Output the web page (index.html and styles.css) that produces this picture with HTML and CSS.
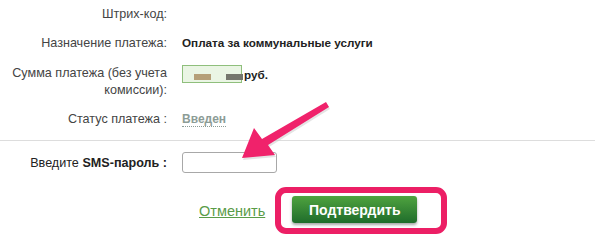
FILE: index.html
```html
<!DOCTYPE html>
<html lang="ru">
<head>
    <meta charset="UTF-8">
    <title>Подтверждение платежа</title>
    <link rel="stylesheet" href="styles.css">
</head>
<body>
    <div class="page">
        <!-- Детали платежа -->
        <div class="details">
            <div class="row r1">
                <span class="label">Штрих-код:</span>
                <span class="value"></span>
            </div>
            <div class="row r2">
                <span class="label">Назначение платежа:</span>
                <span class="value strong">Оплата за коммунальные услуги</span>
            </div>
            <div class="row r3">
                <span class="label">Сумма платежа (без учета<br>комиссии):</span>
                <span class="value sum">
                    <span class="sum-box"><i class="blur b1"></i><i class="blur b2"></i></span>
                    <span class="strong">руб.</span>
                </span>
            </div>
            <div class="row r4">
                <span class="label">Статус платежа :</span>
                <span class="value"><span class="status">Введен</span></span>
            </div>
        </div>

        <hr class="divider">

        <!-- SMS-пароль -->
        <div class="row sms">
            <label class="label" for="sms">Введите <b>SMS-пароль :</b></label>
            <span class="value"><input id="sms" class="sms-input" type="text"></span>
        </div>

        <!-- Кнопки -->
        <div class="actions">
            <a href="#" class="cancel">Отменить</a>
            <span class="highlight">
                <button class="confirm">Подтвердить</button>
            </span>
        </div>

        <!-- Стрелка-подсказка -->
        <svg class="arrow" width="110" height="80" viewBox="0 0 110 80">
            <path d="M96 12 L99 17 L38 55 L45 65 L12 68 L24 38 L32 49 Z" fill="#c9c9c9" opacity="0.5" transform="translate(1 2)"/>
            <path d="M96 12 L99 17 L38 55 L45 65 L12 68 L24 38 L32 49 Z" fill="#f0226b"/>
        </svg>
    </div>
</body>
</html>
```

FILE: styles.css
```css
* {
    margin: 0;
    padding: 0;
    box-sizing: border-box;
}

body {
    font-family: 'Liberation Sans', Arial, sans-serif;
    font-size: 12.6px;
    background-color: #fff;
    color: #444;
    width: 595px;
    height: 244px;
    overflow: hidden;
}

.page {
    position: relative;
    height: 100%;
}

.details {
    padding-top: 6px;
}

.row {
    display: grid;
    grid-template-columns: 167px 1fr;
    column-gap: 15px;
    line-height: 16px;
}

.label {
    text-align: right;
    color: #444;
}

.value {
    color: #222;
}

.strong {
    font-weight: bold;
    font-size: 11.7px;
}

.r1 {
    margin-bottom: 13px;
}

.r2 {
    margin-bottom: 14px;
}

.r3 {
    line-height: 17px;
    align-items: start;
    margin-bottom: 12px;
}

.sum {
    display: flex;
    align-items: center;
    height: 18px;
}

.sum-box {
    display: block;
    position: relative;
    width: 60px;
    height: 18px;
    border: 1px solid #8fbf7c;
    background-color: #eaf5e4;
}

.blur {
    position: absolute;
    top: 8px;
    height: 6px;
    filter: blur(0.6px);
}

.b1 {
    left: 11px;
    width: 17px;
    background-color: #b59f78;
}

.b2 {
    left: 43px;
    width: 17px;
    background-color: #75766d;
}

.sum .strong {
    margin-left: 2px;
}

.status {
    font-weight: bold;
    font-size: 12px;
    color: #8c9c96;
    border-bottom: 1px dotted #8c9c96;
}

.divider {
    border: none;
    border-top: 1px solid #ddd;
    margin-top: 13px;
}

.sms {
    margin-top: 11px;
    align-items: center;
}

.sms .label {
    color: #222;
}

.sms-input {
    display: block;
    width: 95px;
    height: 21px;
    border: 1px solid #a8a8a8;
    border-radius: 3px;
    background-color: #fff;
}

.actions {
    display: flex;
    align-items: center;
    padding-left: 199px;
    margin-top: 14px;
}

.cancel {
    color: #5a9c48;
    font-size: 14.5px;
    text-decoration: underline;
    margin-right: 10px;
}

.highlight {
    display: inline-flex;
    border: 6px solid #ec1f65;
    border-radius: 11px;
    padding: 3px 24px 5px 11px;
}

.confirm {
    width: 125px;
    height: 27px;
    border: none;
    border-radius: 3px;
    font-family: 'Liberation Sans', Arial, sans-serif;
    font-size: 14px;
    font-weight: bold;
    color: #fff;
    background: linear-gradient(#4fa33f, #1f6c2b);
    box-shadow: 0 2px 3px rgba(0, 0, 0, 0.35);
    cursor: pointer;
}

.arrow {
    position: absolute;
    left: 230px;
    top: 90px;
}
```
